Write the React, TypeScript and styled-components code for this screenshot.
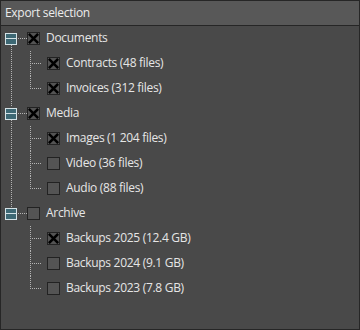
import React from "react";
import styled, { createGlobalStyle } from "styled-components";

const GlobalStyle = createGlobalStyle`
  html, body {
    margin: 0;
    padding: 0;
    background: #3a3a3a;
  }
  body {
    font-family: "Open Sans", "Noto Sans", sans-serif;
    font-size: 12px;
    letter-spacing: -0.3px;
    color: #e6e6e6;
  }
`;

interface TreeItem {
  label: string;
  checked: boolean;
}

interface TreeGroup {
  label: string;
  checked: boolean;
  children: TreeItem[];
}

const groups: TreeGroup[] = [
  {
    label: "Documents",
    checked: true,
    children: [
      { label: "Contracts (48 files)", checked: true },
      { label: "Invoices (312 files)", checked: true },
    ],
  },
  {
    label: "Media",
    checked: true,
    children: [
      { label: "Images (1 204 files)", checked: true },
      { label: "Video (36 files)", checked: false },
      { label: "Audio (88 files)", checked: false },
    ],
  },
  {
    label: "Archive",
    checked: false,
    children: [
      { label: "Backups 2025 (12.4 GB)", checked: true },
      { label: "Backups 2024 (9.1 GB)", checked: false },
      { label: "Backups 2023 (7.8 GB)", checked: false },
    ],
  },
];

const dotsV = "repeating-linear-gradient(to bottom, #b4b4b4 0 1px, transparent 1px 2px)";
const dotsH = "repeating-linear-gradient(to right, #b4b4b4 0 1px, transparent 1px 2px)";

const Panel = styled.div`
  width: 360px;
  height: 330px;
  box-sizing: border-box;
  border: 1px solid #262626;
  background: #494949;
  display: flex;
  flex-direction: column;
`;

const Header = styled.div`
  height: 25px;
  flex-shrink: 0;
  box-sizing: border-box;
  background: #585858;
  border-bottom: 1px solid #262626;
  padding-left: 4px;
  display: flex;
  align-items: center;
  line-height: 1;
  color: #ececec;
`;

const Tree = styled.div`
  display: flex;
  flex-direction: column;
`;

const Group = styled.div`
  display: flex;
  flex-direction: column;
`;

const Row = styled.div`
  height: 25px;
  display: flex;
  align-items: center;
`;

const RootRow = styled(Row)`
  padding-left: 4px;
`;

const Expander = styled.span`
  position: relative;
  width: 12px;
  height: 12px;
  box-sizing: border-box;
  border: 1px solid #d4e2e6;
  background: #3d6874;
  flex-shrink: 0;

  &::after {
    content: "";
    position: absolute;
    left: 0;
    right: 0;
    top: 4px;
    height: 1px;
    background: #d4e2e6;
  }
`;

const Connector = styled.span`
  width: 10px;
  height: 1px;
  flex-shrink: 0;
  background: ${dotsH};
  background-position: 1px 0;
`;

const Children = styled.div<{ $line: boolean }>`
  position: relative;
  display: flex;
  flex-direction: column;

  &::before {
    content: "";
    display: ${(p) => (p.$line ? "block" : "none")};
    position: absolute;
    left: 10px;
    top: -6px;
    bottom: -6px;
    width: 1px;
    background: ${dotsV};
  }
`;

const ChildRow = styled(Row)`
  padding-left: 29px;
`;

const Guide = styled.span<{ $last: boolean }>`
  position: relative;
  align-self: stretch;
  width: 17px;
  flex-shrink: 0;

  &::before {
    content: "";
    position: absolute;
    left: 0;
    top: 0;
    width: 1px;
    height: ${(p) => (p.$last ? "13px" : "100%")};
    background: ${dotsV};
  }

  &::after {
    content: "";
    position: absolute;
    left: 2px;
    top: 12px;
    width: 10px;
    height: 1px;
    background: ${dotsH};
  }
`;

const Box = styled.span`
  width: 13px;
  height: 13px;
  box-sizing: border-box;
  border: 1px solid #222;
  background: #545454;
  flex-shrink: 0;
  display: flex;
  align-items: center;
  justify-content: center;
`;

const Label = styled.span`
  margin-left: 6px;
  white-space: nowrap;
  line-height: 1;
  padding-bottom: 1px;
`;

function Check({ checked }: { checked: boolean }) {
  return (
    <Box>
      {checked && (
        <svg width="11" height="11" viewBox="0 0 11 11">
          <path d="M1.8 1.8 L9.2 9.2 M9.2 1.8 L1.8 9.2" stroke="#000" strokeWidth="2.6" strokeLinecap="square" />
        </svg>
      )}
    </Box>
  );
}

export default function App() {
  return (
    <>
      <GlobalStyle />
      <Panel>
        <Header>Export selection</Header>
        <Tree>
          {groups.map((g, gi) => (
            <Group key={g.label}>
              <RootRow>
                <Expander />
                <Connector />
                <Check checked={g.checked} />
                <Label>{g.label}</Label>
              </RootRow>
              <Children $line={gi < groups.length - 1}>
                {g.children.map((c, ci) => (
                  <ChildRow key={c.label}>
                    <Guide $last={ci === g.children.length - 1} />
                    <Check checked={c.checked} />
                    <Label>{c.label}</Label>
                  </ChildRow>
                ))}
              </Children>
            </Group>
          ))}
        </Tree>
      </Panel>
    </>
  );
}
